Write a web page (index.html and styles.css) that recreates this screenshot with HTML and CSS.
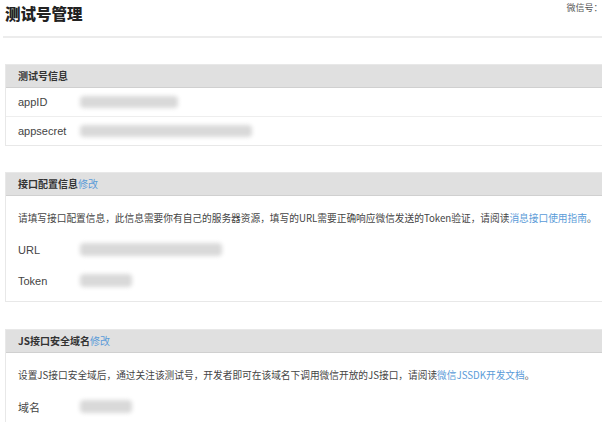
FILE: index.html
```html
<!DOCTYPE html>
<html lang="zh-CN">
<head>
<meta charset="utf-8">
<title>测试号管理</title>
<link rel="stylesheet" href="styles.css">
</head>
<body>
<div class="page">
  <div class="top">
    <h1 class="title">测试号管理</h1>
    <span class="account">微信号：</span>
  </div>

  <div class="section first">
    <div class="sec-head">测试号信息</div>
    <div class="kv-row divided"><span class="label">appID</span><span class="blur w98"></span></div>
    <div class="kv-row"><span class="label">appsecret</span><span class="blur w172"></span></div>
  </div>

  <div class="section second">
    <div class="sec-head">接口配置信息<a class="link">修改</a></div>
    <div class="sec-body">
      <p class="desc">请填写接口配置信息，此信息需要你有自己的服务器资源，填写的URL需要正确响应微信发送的Token验证，请阅读<a class="link">消息接口使用指南</a>。</p>
      <div class="field"><span class="label">URL</span><span class="blur w142"></span></div>
      <div class="field"><span class="label">Token</span><span class="blur w52"></span></div>
    </div>
  </div>

  <div class="section">
    <div class="sec-head">JS接口安全域名<a class="link">修改</a></div>
    <div class="sec-body">
      <p class="desc">设置JS接口安全域后，通过关注该测试号，开发者即可在该域名下调用微信开放的JS接口，请阅读<a class="link">微信JSSDK开发文档</a>。</p>
      <div class="field"><span class="label">域名</span><span class="blur w52"></span></div>
    </div>
  </div>
</div>
</body>
</html>
```

FILE: styles.css
```css
html, body {
  margin: 0;
  padding: 0;
  background: #ffffff;
  overflow: hidden;
}
body {
  font-family: "Liberation Sans", "Noto Sans CJK SC", sans-serif;
  color: #333333;
}
.page {
  width: 640px;
}
.top {
  display: flex;
  align-items: flex-start;
  height: 36px;
  margin-left: 3px;
  border-bottom: 2px solid #ececec;
}
.title {
  margin: 0;
  padding-left: 2px;
  padding-top: 3px;
  font-family: "Noto Sans CJK SC", sans-serif;
  font-size: 15.5px;
  font-weight: 900;
  line-height: 20px;
  color: #222222;
  white-space: nowrap;
}
.account {
  margin-left: 484px;
  padding-top: 1px;
  font-family: "Noto Sans CJK SC", sans-serif;
  font-size: 9px;
  line-height: 14px;
  color: #555555;
  white-space: nowrap;
}
.section {
  margin-left: 5px;
  margin-top: 27px;
  border: 1px solid #e8e8e8;
  border-right: none;
}
.section.first {
  margin-top: 26px;
}
.section.second {
  margin-top: 26px;
}
.sec-head {
  height: 22px;
  line-height: 22px;
  padding-left: 12px;
  background: #e0e0e0;
  border-bottom: 1px solid #d0d0d0;
  font-family: "Noto Sans CJK SC", sans-serif;
  font-size: 10px;
  font-weight: bold;
  color: #333333;
}
.link {
  color: #5a9bd8;
  font-weight: normal;
  text-decoration: none;
}
.kv-row {
  display: flex;
  align-items: center;
  height: 28px;
  padding-left: 12px;
  font-size: 11px;
}
.kv-row.divided {
  border-bottom: 1px solid #eeeeee;
}
.label {
  width: 62px;
  flex: none;
  font-size: 11px;
  color: #444444;
}
.blur {
  display: inline-block;
  height: 12px;
  background: #d9d9d9;
  border-radius: 4px;
  filter: blur(2px);
}
.w98 { width: 98px; }
.w172 { width: 172px; }
.w142 { width: 142px; height: 13px; }
.w52 { width: 52px; height: 13px; }
.sec-body {
  padding: 12px 12px 5px;
}
.desc {
  margin: 0 0 6px;
  font-family: "Noto Sans CJK SC", sans-serif;
  font-size: 9.7px;
  line-height: 20px;
  color: #444444;
  white-space: nowrap;
}
.field {
  display: flex;
  align-items: center;
  height: 31px;
}
```
